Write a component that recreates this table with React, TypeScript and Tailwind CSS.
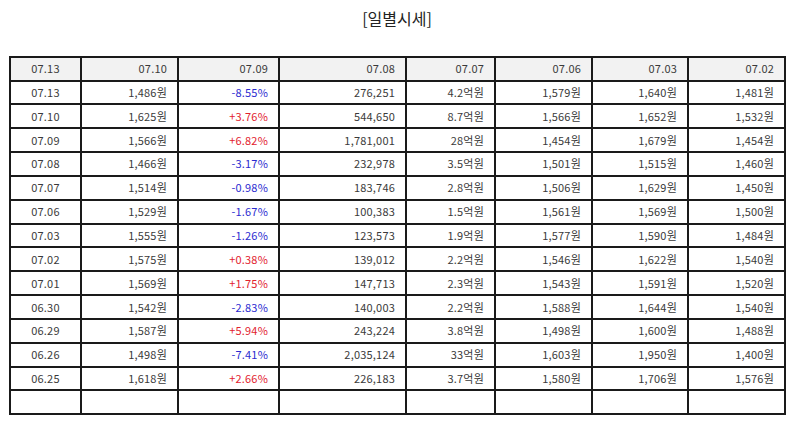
import React from "react";

const header = ["07.13", "07.10", "07.09", "07.08", "07.07", "07.06", "07.03", "07.02"];
const widths = [71, 97, 101, 127, 89, 97, 96, 97];

const rows: string[][] = [
  ["07.13", "1,486원", "-8.55%", "276,251", "4.2억원", "1,579원", "1,640원", "1,481원"],
  ["07.10", "1,625원", "+3.76%", "544,650", "8.7억원", "1,566원", "1,652원", "1,532원"],
  ["07.09", "1,566원", "+6.82%", "1,781,001", "28억원", "1,454원", "1,679원", "1,454원"],
  ["07.08", "1,466원", "-3.17%", "232,978", "3.5억원", "1,501원", "1,515원", "1,460원"],
  ["07.07", "1,514원", "-0.98%", "183,746", "2.8억원", "1,506원", "1,629원", "1,450원"],
  ["07.06", "1,529원", "-1.67%", "100,383", "1.5억원", "1,561원", "1,569원", "1,500원"],
  ["07.03", "1,555원", "-1.26%", "123,573", "1.9억원", "1,577원", "1,590원", "1,484원"],
  ["07.02", "1,575원", "+0.38%", "139,012", "2.2억원", "1,546원", "1,622원", "1,540원"],
  ["07.01", "1,569원", "+1.75%", "147,713", "2.3억원", "1,543원", "1,591원", "1,520원"],
  ["06.30", "1,542원", "-2.83%", "140,003", "2.2억원", "1,588원", "1,644원", "1,540원"],
  ["06.29", "1,587원", "+5.94%", "243,224", "3.8억원", "1,498원", "1,600원", "1,488원"],
  ["06.26", "1,498원", "-7.41%", "2,035,124", "33억원", "1,603원", "1,950원", "1,400원"],
  ["06.25", "1,618원", "+2.66%", "226,183", "3.7억원", "1,580원", "1,706원", "1,576원"],
  ["", "", "", "", "", "", "", ""],
];

const cellBase = "border-2 border-[#1a1a1a] px-[10px] py-0 text-[11px] leading-none tracking-[0.2px]";

export default function App() {
  return (
    <div
      className="w-[794px] h-[425px] bg-white text-[#3a3a3a]"
      style={{ fontFamily: '"Noto Sans CJK KR", "Noto Sans", sans-serif' }}
    >
      <div className="pt-[7px] h-[56px] text-center text-[16px] leading-[22px] text-[#222]">[일별시세]</div>
      <table className="ml-[9px] w-[777px] table-fixed border-collapse">
        <colgroup>
          {widths.map((w, i) => (
            <col key={i} style={{ width: w }} />
          ))}
        </colgroup>
        <thead>
          <tr className="h-[23.5px] bg-[#f2f2f2]">
            {header.map((h, i) => (
              <th
                key={i}
                className={`${cellBase} font-normal ${i === 0 ? "text-center" : "text-right"}`}
              >
                {h}
              </th>
            ))}
          </tr>
        </thead>
        <tbody>
          {rows.map((r, ri) => (
            <tr key={ri} className="h-[23.85px]">
              {r.map((c, ci) => {
                let color = "";
                if (ci === 2 && c.startsWith("-")) color = "text-[#2b2bd0]";
                if (ci === 2 && c.startsWith("+")) color = "text-[#e2222e]";
                return (
                  <td
                    key={ci}
                    className={`${cellBase} ${ci === 0 ? "text-center" : "text-right"} ${color}`}
                  >
                    {c}
                  </td>
                );
              })}
            </tr>
          ))}
        </tbody>
      </table>
    </div>
  );
}
